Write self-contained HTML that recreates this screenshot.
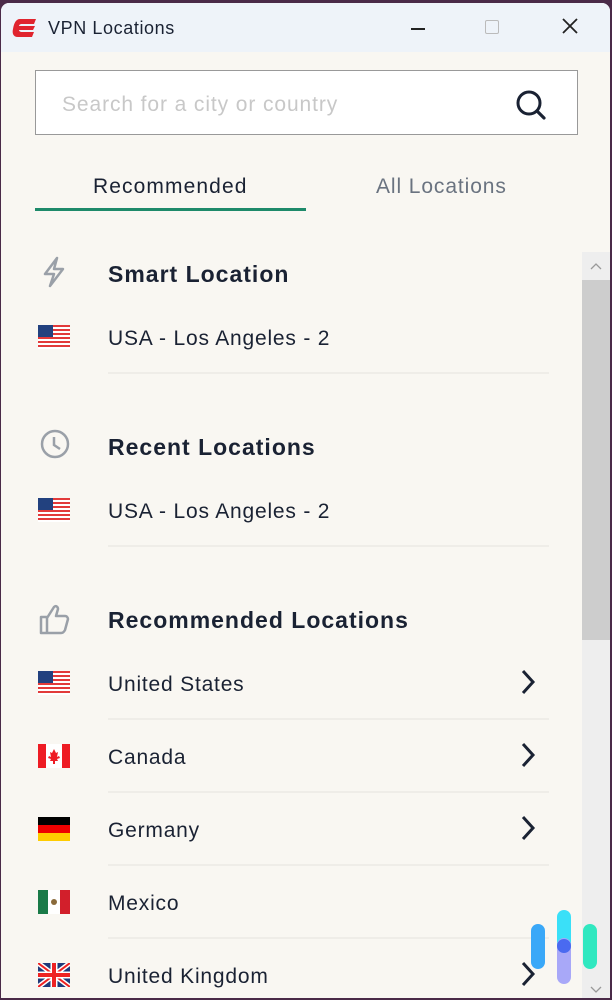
<!DOCTYPE html>
<html><head><meta charset="utf-8"><style>
*{margin:0;padding:0;box-sizing:border-box}
body{width:612px;height:1000px;background:#4a2a48;font-family:"Liberation Sans",sans-serif;position:relative;overflow:hidden}
.win{position:absolute;left:1px;top:3px;width:609px;height:995px;background:#f9f7f2;border-radius:8px 8px 0 0;overflow:hidden}
.tb{position:absolute;left:0;top:0;width:100%;height:49px;background:#eef3f9}
.abs{position:absolute}
.t{color:#1a2233;white-space:nowrap}
.sep{position:absolute;left:107px;width:441px;height:2px;background:#efede8}
.flag{position:absolute;left:37px;width:32px;height:24px}
.h{font-size:23px;font-weight:bold;letter-spacing:1px}
.i{font-size:21px;letter-spacing:0.8px}
</style></head><body>
<div class="win">
<div class="tb">
<svg class="abs" style="left:11px;top:15px" width="26" height="20" viewBox="0 0 26 20"><path d="M8 1h16l-2 5H10c-2 0-3 1-3 2h16l-2 4H7c0 1 1 2 3 2h12l-2 5H6C1 19 0 15 1 11 2 5 4 1 8 1z" fill="#e0242e"/></svg>
<div class="abs t" style="left:47px;top:15px;font-size:18px;letter-spacing:0.6px">VPN Locations</div>
<div class="abs" style="left:410px;top:25px;width:14px;height:2px;background:#222"></div>
<div class="abs" style="left:484px;top:17px;width:14px;height:14px;border:1.5px solid #bbb;border-radius:2px"></div>
<svg class="abs" style="left:561px;top:15px" width="16" height="16"><path d="M1 1L15 15M15 1L1 15" stroke="#222" stroke-width="1.8"/></svg>
</div>
<div class="abs" style="left:34px;top:67px;width:543px;height:65px;background:#fff;border:1.5px solid #999"></div>
<div class="abs" style="left:61px;top:90px;font-size:21px;color:#c8c8c8;letter-spacing:0.9px">Search for a city or country</div>
<svg class="abs" style="left:513px;top:85px" width="34" height="34" viewBox="0 0 34 34"><circle cx="15" cy="15" r="11" fill="none" stroke="#1a2233" stroke-width="3"/><path d="M23 23l7 7" stroke="#1a2233" stroke-width="3.2" stroke-linecap="round"/></svg>
<div class="abs t i" style="left:92px;top:172px;letter-spacing:1.1px">Recommended</div>
<div class="abs i" style="left:375px;top:172px;color:#6a7380;letter-spacing:0.9px">All Locations</div>
<div class="abs" style="left:34px;top:205px;width:271px;height:3px;background:#1e8a6a"></div>
<div class="abs" style="left:581px;top:249px;width:28px;height:746px;background:#eeeeee"></div>
<div class="abs" style="left:581px;top:277px;width:28px;height:360px;background:#cdcdcd"></div>
<svg class="abs" style="left:589px;top:259px" width="12" height="8"><path d="M1 7l5-5 5 5" fill="none" stroke="#999" stroke-width="1.3"/></svg>
<svg class="abs" style="left:589px;top:983px" width="12" height="8"><path d="M1 1l5 5 5-5" fill="none" stroke="#999" stroke-width="1.3"/></svg>

<svg class="abs" style="left:38px;top:252px" width="30" height="34" viewBox="0 0 30 34"><path d="M18 3L6 19h9l-4 12 13-17h-9z" fill="none" stroke="#9aa0a8" stroke-width="2.5" stroke-linejoin="round"/></svg>
<div class="abs t h" style="left:107px;top:258px">Smart Location</div>
<svg class="flag" style="top:322px" viewBox="0 0 32 24"><rect width="32" height="24" fill="#fff"/><g fill="#e23a3a"><rect y="0" width="32" height="2"/><rect y="4" width="32" height="2"/><rect y="8" width="32" height="2"/><rect y="12" width="32" height="2"/><rect y="16" width="32" height="2"/><rect y="20" width="32" height="2"/></g><rect width="15" height="12" fill="#22417f"/></svg>
<div class="abs t i" style="left:107px;top:324px">USA - Los Angeles - 2</div>
<div class="sep" style="top:369px"></div>

<svg class="abs" style="left:38px;top:425px" width="32" height="32" viewBox="0 0 32 32"><circle cx="16" cy="16" r="13" fill="none" stroke="#9aa0a8" stroke-width="2.5"/><path d="M15 9v8l6 4" fill="none" stroke="#9aa0a8" stroke-width="2.5"/></svg>
<div class="abs t h" style="left:107px;top:431px">Recent Locations</div>
<svg class="flag" style="top:495px" viewBox="0 0 32 24"><rect width="32" height="24" fill="#fff"/><g fill="#e23a3a"><rect y="0" width="32" height="2"/><rect y="4" width="32" height="2"/><rect y="8" width="32" height="2"/><rect y="12" width="32" height="2"/><rect y="16" width="32" height="2"/><rect y="20" width="32" height="2"/></g><rect width="15" height="12" fill="#22417f"/></svg>
<div class="abs t i" style="left:107px;top:497px">USA - Los Angeles - 2</div>
<div class="sep" style="top:542px"></div>

<svg class="abs" style="left:37px;top:599px" width="34" height="34" viewBox="0 0 34 34"><path d="M3 15h6v16H3zM9 16l7-11c2-2 4 0 4 2l-2 7h9c2 0 3 2 3 3l-3 11c-1 2-2 3-4 3H9" fill="none" stroke="#9aa0a8" stroke-width="2.5" stroke-linejoin="round"/></svg>
<div class="abs t h" style="left:107px;top:604px">Recommended Locations</div>

<svg class="flag" style="top:668px" viewBox="0 0 32 24"><rect width="32" height="24" fill="#fff"/><g fill="#e23a3a"><rect y="0" width="32" height="2"/><rect y="4" width="32" height="2"/><rect y="8" width="32" height="2"/><rect y="12" width="32" height="2"/><rect y="16" width="32" height="2"/><rect y="20" width="32" height="2"/></g><rect width="15" height="12" fill="#22417f"/></svg>
<div class="abs t i" style="left:107px;top:670px">United States</div>
<div class="sep" style="top:715px"></div>
<svg class="flag" style="top:741px" viewBox="0 0 32 24"><rect width="32" height="24" fill="#fff"/><rect width="8" height="24" fill="#ee1c24"/><rect x="24" width="8" height="24" fill="#ee1c24"/><path d="M16 5l2 4 2-1-1 5 2-1 1 2-3 1 1 2h-3v3h-2v-3h-3l1-2-3-1 1-2 2 1-1-5 2 1z" fill="#ee1c24"/></svg>
<div class="abs t i" style="left:107px;top:743px">Canada</div>
<div class="sep" style="top:788px"></div>
<svg class="flag" style="top:814px" viewBox="0 0 32 24"><rect width="32" height="8" fill="#000"/><rect y="8" width="32" height="8" fill="#e00"/><rect y="16" width="32" height="8" fill="#fc0"/></svg>
<div class="abs t i" style="left:107px;top:816px">Germany</div>
<div class="sep" style="top:861px"></div>
<svg class="flag" style="top:887px" viewBox="0 0 32 24"><rect width="32" height="24" fill="#fff"/><rect width="10" height="24" fill="#1a7a48"/><rect x="22" width="10" height="24" fill="#d21f2b"/><circle cx="16" cy="12" r="3" fill="#8a6a3a"/></svg>
<div class="abs t i" style="left:107px;top:889px">Mexico</div>
<div class="sep" style="top:934px"></div>
<svg class="flag" style="top:960px" viewBox="0 0 32 24"><rect width="32" height="24" fill="#1f3a7a"/><path d="M0 0L32 24M32 0L0 24" stroke="#fff" stroke-width="5"/><path d="M0 0L32 24M32 0L0 24" stroke="#e22" stroke-width="2"/><path d="M16 0v24M0 12h32" stroke="#fff" stroke-width="7"/><path d="M16 0v24M0 12h32" stroke="#e22" stroke-width="4"/></svg>
<div class="abs t i" style="left:107px;top:962px">United Kingdom</div>

<svg class="abs" style="left:518px;top:665px" width="18" height="28"><path d="M4 3l10 11-10 11" fill="none" stroke="#1a2233" stroke-width="3"/></svg>
<svg class="abs" style="left:518px;top:738px" width="18" height="28"><path d="M4 3l10 11-10 11" fill="none" stroke="#1a2233" stroke-width="3"/></svg>
<svg class="abs" style="left:518px;top:811px" width="18" height="28"><path d="M4 3l10 11-10 11" fill="none" stroke="#1a2233" stroke-width="3"/></svg>
<svg class="abs" style="left:518px;top:957px" width="18" height="28"><path d="M4 3l10 11-10 11" fill="none" stroke="#1a2233" stroke-width="3"/></svg>
</div>
<svg class="abs" style="left:528px;top:910px" width="72" height="78" viewBox="0 0 72 78"><rect x="3" y="14" width="14" height="45" rx="7" fill="#3aa8f8"/><rect x="29" y="0" width="14" height="40" rx="7" fill="#3ae0f8"/><rect x="29" y="28" width="14" height="46" rx="7" fill="#a8a8f8"/><circle cx="36" cy="36" r="7" fill="#4a6af0"/><rect x="55" y="14" width="14" height="45" rx="7" fill="#30e8c0"/></svg>
</body></html>
